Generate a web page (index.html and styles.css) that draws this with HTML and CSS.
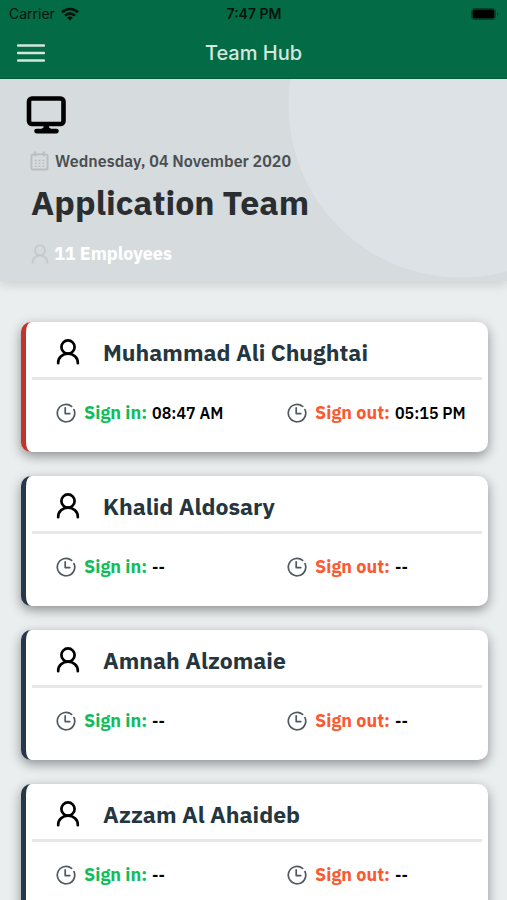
FILE: index.html
```html
<!DOCTYPE html>
<html lang="en">
<head>
<meta charset="utf-8">
<meta name="viewport" content="width=device-width, initial-scale=1">
<title>Team Hub</title>
<link rel="stylesheet" href="styles.css">
</head>
<body>
<svg class="defs" aria-hidden="true">
  <symbol id="person" viewBox="0 0 24 26"><g fill="none" stroke="currentColor" stroke-width="2.7" stroke-linecap="round"><circle cx="12" cy="8" r="6.6"/><path d="M2.200 24.200v-.6a9.800 9 0 0 1 19.600 0v.6"/></g></symbol>
  <symbol id="clock" viewBox="0 0 20 20"><g fill="none" stroke="currentColor" stroke-width="1.7" stroke-linecap="round" stroke-linejoin="round"><path d="M18 6.600A8.700 8.700 0 1 1 15.600 3.400"/><path d="M9.200 4.800v5.800h4.600"/></g></symbol>
</svg>
<div class="app">
  <header class="top">
    <div class="status">
      <span class="carrier">Carrier
        <svg class="wifi" viewBox="0 0 18 14" aria-hidden="true"><g fill="none" stroke="currentColor" stroke-width="2.6"><path d="M1 5.2a11.6 11.6 0 0 1 16 0"/><path d="M4 8.6a7.2 7.2 0 0 1 10 0"/></g><path d="M9 13.6 6.2 10.8a4 4 0 0 1 5.6 0z"/></svg>
      </span>
      <span class="time">7:47 PM</span>
      <svg class="battery" viewBox="0 0 28 12" aria-hidden="true"><rect x=".5" y=".5" width="24" height="11" rx="3" fill="none" stroke="#000" stroke-opacity=".35"/><rect x="1.5" y="1.5" width="22" height="9" rx="2"/><path d="M26 4v4c2-1 2-3 0-4z" opacity=".4"/></svg>
    </div>
    <div class="nav">
      <button class="menu" type="button" aria-label="Menu"><svg viewBox="0 0 28 20"><path d="M1 2.5h26M1 10h26M1 17.5h26" stroke="currentColor" stroke-width="2.4" stroke-linecap="round"/></svg></button>
      <h1>Team Hub</h1>
    </div>
  </header>
  <main class="scroll">
    <section class="hero">
      <svg class="monitor" viewBox="0 0 40 38" aria-hidden="true"><rect x="3" y="2.500" width="34.500" height="25.500" rx="3" fill="none" stroke="#000" stroke-width="4.600"/><path d="M17.500 29h5.500v2.500l2 1.300h5.500a2.300 2.300 0 0 1 0 4.600H10.500a2.300 2.300 0 0 1 0-4.600h5l2-1.300z"/></svg>
      <p class="date"><svg viewBox="0 0 20 20" aria-hidden="true"><g fill="none" stroke="currentColor" stroke-width="2"><rect x="1.500" y="3" width="17" height="16" rx="2"/><path d="M5.500 0v5M14.500 0v5"/><path d="M5 9.500h10M5 12.500h10M5 15.500h10" stroke-width="1.400" stroke-dasharray="2 2"/></g></svg>Wednesday, 04 November 2020</p>
      <h2>Application Team</h2>
      <p class="count"><svg aria-hidden="true"><use href="#person"/></svg>11 Employees</p>
    </section>
    <section class="list">
      <article class="card active">
        <h3><svg class="person" aria-hidden="true"><use href="#person"/></svg>Muhammad Ali Chughtai</h3>
        <div class="times">
          <p><svg class="clock" aria-hidden="true"><use href="#clock"/></svg><span class="in">Sign in:</span><b>08:47 AM</b></p>
          <p><svg class="clock" aria-hidden="true"><use href="#clock"/></svg><span class="out">Sign out:</span><b>05:15 PM</b></p>
        </div>
      </article>
      <article class="card">
        <h3><svg class="person" aria-hidden="true"><use href="#person"/></svg>Khalid Aldosary</h3>
        <div class="times">
          <p><svg class="clock" aria-hidden="true"><use href="#clock"/></svg><span class="in">Sign in:</span><b>--</b></p>
          <p><svg class="clock" aria-hidden="true"><use href="#clock"/></svg><span class="out">Sign out:</span><b>--</b></p>
        </div>
      </article>
      <article class="card">
        <h3><svg class="person" aria-hidden="true"><use href="#person"/></svg>Amnah Alzomaie</h3>
        <div class="times">
          <p><svg class="clock" aria-hidden="true"><use href="#clock"/></svg><span class="in">Sign in:</span><b>--</b></p>
          <p><svg class="clock" aria-hidden="true"><use href="#clock"/></svg><span class="out">Sign out:</span><b>--</b></p>
        </div>
      </article>
      <article class="card">
        <h3><svg class="person" aria-hidden="true"><use href="#person"/></svg>Azzam Al Ahaideb</h3>
        <div class="times">
          <p><svg class="clock" aria-hidden="true"><use href="#clock"/></svg><span class="in">Sign in:</span><b>--</b></p>
          <p><svg class="clock" aria-hidden="true"><use href="#clock"/></svg><span class="out">Sign out:</span><b>--</b></p>
        </div>
      </article>
    </section>
  </main>
</div>
</body>
</html>
```
FILE: styles.css
```css
* { box-sizing: border-box; margin: 0; padding: 0; }
body { font-family: "IBM Plex Sans", "Noto Sans", sans-serif; background: #eaeeef; }
.defs { display: none; }
.app { display: flex; flex-direction: column; height: 100vh; }

.top { background: #036b45; border-bottom: 1px solid #025a3a; font-family: Inter, sans-serif; }
.status { display: grid; grid-template-columns: 1fr auto 1fr; align-items: center; height: 27px; padding: 0 8px 0 9px; font-size: 14px; color: #05140d; }
.carrier { display: flex; align-items: center; gap: 6px; }
.wifi { width: 18px; height: 14px; }
.time { font-weight: 600; }
.battery { width: 28px; height: 12px; justify-self: end; }
.nav { display: grid; grid-template-columns: 1fr auto 1fr; align-items: center; height: 51px; padding: 0 17px; color: #d3e7de; }
.menu { width: 28px; height: 20px; border: 0; background: none; color: inherit; }
.menu svg { display: block; width: 28px; height: 20px; }
.nav h1 { font-size: 20px; font-weight: 500; line-height: 24px; }

.scroll { flex: 1; min-height: 0; overflow-y: auto; scrollbar-width: none; }
.hero { padding: 17px 26px 15px; background: radial-gradient(circle at 461px 26px, #dce2e5 172px, #d6dbde 173px); box-shadow: 0 4px 10px rgba(0, 0, 0, .12); }
.monitor { display: block; width: 40px; height: 38px; }
.date { display: flex; align-items: center; gap: 6px; margin: 15px 0 0 4px; font-size: 16px; font-weight: 600; line-height: 24px; color: #4a4f52; }
.date svg { width: 19px; height: 20px; color: #b9bec0; }
.hero h2 { margin: 3px 0 0 5px; font-size: 34px; font-weight: 700; line-height: 52px; color: #2b2e30; }
.count { display: flex; align-items: center; gap: 5px; margin: 14px 0 0 5px; font-size: 18px; font-weight: 700; line-height: 24px; color: #fff; }
.count svg { width: 18px; height: 20px; color: #c5cacc; }

.list { display: flex; flex-direction: column; gap: 24px; padding: 41px 19px 24px 21px; }
.card { height: 130px; padding: 0 6px; background: #fff; border-left: 5px solid #26394a; border-radius: 10px; box-shadow: 0 4px 12px rgba(0, 0, 0, .4); }
.card.active { border-left-color: #c0342b; }
.card h3 { display: flex; align-items: center; gap: 23px; height: 58px; padding: 4px 24px 0; border-bottom: 3px solid #e6e7e9; font-size: 23px; font-weight: 700; color: #243640; }
.person { width: 24px; height: 26px; color: #000; }
.times { display: grid; grid-template-columns: 231px 1fr; padding: 21px 0 0 24px; }
.times p { display: flex; align-items: center; white-space: nowrap; font-size: 18px; font-weight: 700; line-height: 24px; }
.clock { width: 20px; height: 20px; margin-right: 8px; color: #4e5960; }
.in { color: #0fbd5b; }
.out { color: #fa5a32; }
.times b { margin-left: 5px; font-size: 16px; font-weight: 600; color: #000; }
```
